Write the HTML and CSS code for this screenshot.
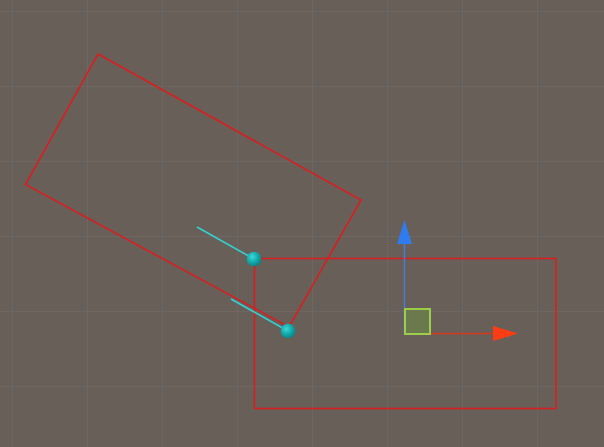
FILE: index.html
```html
<!DOCTYPE html>
<html lang="en">
<head>
<meta charset="utf-8">
<title>Scene</title>
<link rel="stylesheet" href="styles.css">
</head>
<body>
<main class="scene">
  <svg class="viewport" width="604" height="447" viewBox="0 0 604 447" xmlns="http://www.w3.org/2000/svg">
    <defs>
      <radialGradient id="ball" cx="0.38" cy="0.35" r="0.7">
        <stop offset="0" stop-color="#3fd6d6"/>
        <stop offset="0.55" stop-color="#10a9ab"/>
        <stop offset="1" stop-color="#0a7f82"/>
      </radialGradient>
    </defs>

    <!-- world grid -->
    <g class="grid">
      <line x1="12.5" y1="0" x2="12.5" y2="447"/>
      <line x1="87.5" y1="0" x2="87.5" y2="447"/>
      <line x1="162.5" y1="0" x2="162.5" y2="447"/>
      <line x1="237.5" y1="0" x2="237.5" y2="447"/>
      <line x1="312.5" y1="0" x2="312.5" y2="447"/>
      <line x1="387.5" y1="0" x2="387.5" y2="447"/>
      <line x1="462.5" y1="0" x2="462.5" y2="447"/>
      <line x1="537.5" y1="0" x2="537.5" y2="447"/>
      <line x1="0" y1="11.5" x2="604" y2="11.5"/>
      <line x1="0" y1="86.5" x2="604" y2="86.5"/>
      <line x1="0" y1="161.5" x2="604" y2="161.5"/>
      <line x1="0" y1="236.5" x2="604" y2="236.5"/>
      <line x1="0" y1="311.5" x2="604" y2="311.5"/>
      <line x1="0" y1="386.5" x2="604" y2="386.5"/>
    </g>

    <!-- collider outlines -->
    <polygon class="collider" points="98,54 361,200 289,327 25.5,184.5"/>
    <rect class="collider" x="254.5" y="258.5" width="301.5" height="150"/>

    <!-- joint anchors -->
    <line class="anchor" x1="197" y1="227" x2="254" y2="259"/>
    <line class="anchor" x1="231" y1="299" x2="288" y2="331"/>
    <circle cx="254" cy="259" r="7.3" fill="url(#ball)"/>
    <circle cx="288" cy="331" r="7.3" fill="url(#ball)"/>

    <!-- move tool handle -->
    <line class="axis-y" x1="404.5" y1="334" x2="404.5" y2="240"/>
    <polygon class="cone-y" points="404.5,220 397,244 412,244"/>
    <line class="axis-x" x1="404" y1="333.5" x2="496" y2="333.5"/>
    <polygon class="cone-x" points="518,333.5 493,326 493,341"/>
    <rect class="plane" x="405" y="309" width="25" height="25"/>
  </svg>
</main>
</body>
</html>
```

FILE: styles.css
```css
html, body {
  margin: 0;
  padding: 0;
  background: #685f59;
  overflow: hidden;
}

.scene {
  width: 604px;
  height: 447px;
  background: #685f59;
}

.viewport {
  display: block;
}

.grid line {
  stroke: #6e6761;
  stroke-width: 1.2;
}

.collider {
  fill: none;
  stroke: #d81f1f;
  stroke-width: 1.6;
}

.anchor {
  stroke: #35d0d2;
  stroke-width: 1.6;
}

.axis-y {
  stroke: #4f79d8;
  stroke-width: 1.5;
}

.cone-y {
  fill: #2f7bf0;
}

.axis-x {
  stroke: #d23a22;
  stroke-width: 1.5;
}

.cone-x {
  fill: #ff3d14;
}

.plane {
  fill: #6b7a4d;
  stroke: #9ccc4c;
  stroke-width: 2;
}
```
